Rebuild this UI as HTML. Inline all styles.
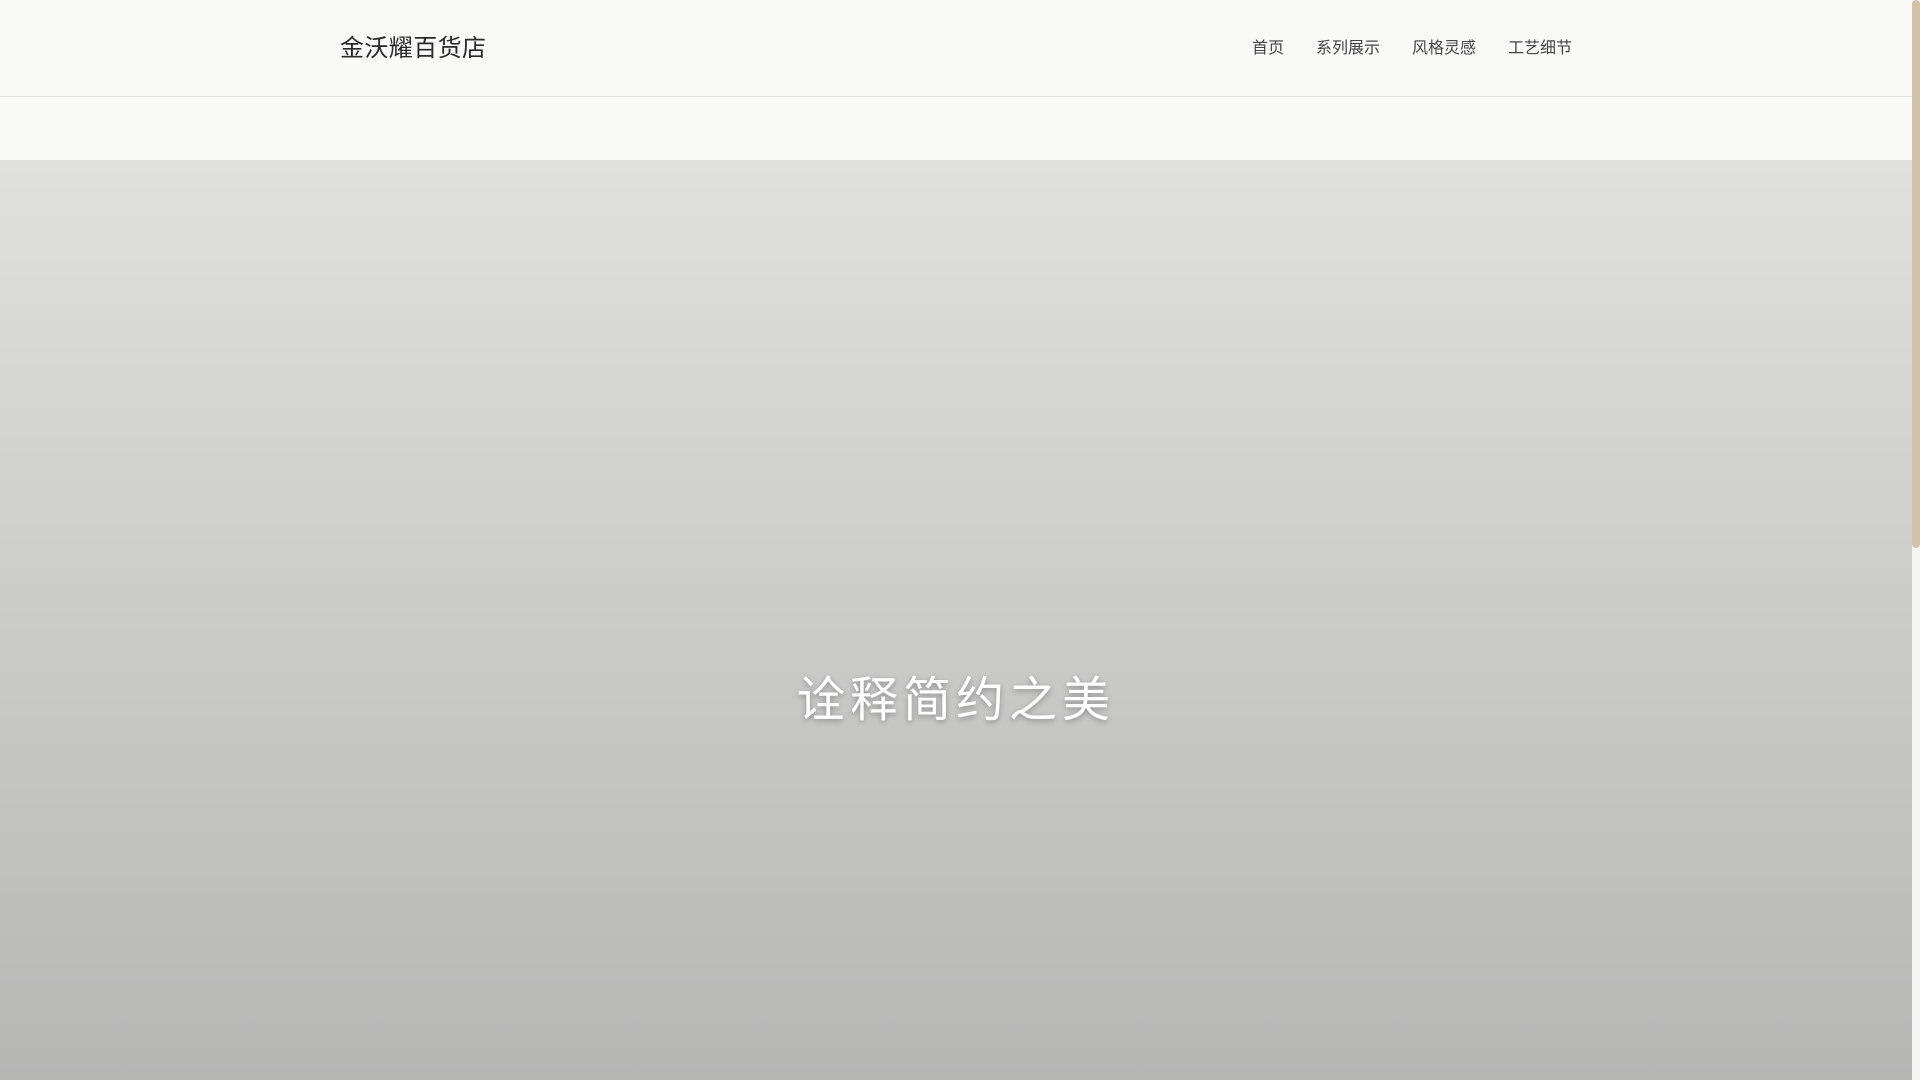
<!DOCTYPE html>
<html><head><meta charset="utf-8"><style>
html,body{margin:0;padding:0;width:1920px;height:1080px;overflow:hidden;background:#f9f9f7;font-family:"Liberation Sans","Noto Sans CJK SC",sans-serif}
.hdr{position:absolute;left:0;top:0;width:1912px;height:96px;border-bottom:1px solid #e2e2e0;background:#f9f9f7}
.logo{position:absolute;left:340px;top:33px;font-size:24px;line-height:32px;letter-spacing:0.4px;color:#2a2a2a}
.nav{position:absolute;left:1252px;top:38px;font-size:16px;line-height:22px;color:#444}
.nav span{margin-right:32px}
.hero{position:absolute;left:0;top:160px;width:1912px;height:920px;background:linear-gradient(#e0e0de,#b6b6b5)}
.hero h1{position:absolute;left:0;width:100%;top:509px;margin:0;text-align:center;font-weight:normal;font-size:48px;line-height:64px;letter-spacing:5px;color:#fff;text-shadow:0 2px 6px rgba(0,0,0,.3)}
.sb{position:absolute;left:1912px;top:0;width:8px;height:1080px;background:#f5f5f3}
.th{position:absolute;left:1912px;top:0;width:8px;height:548px;background:#d2c2aa;border-radius:4px}
</style></head><body>
<div class="hdr"><div class="logo">金沃耀百货店</div>
<div class="nav"><span>首页</span><span>系列展示</span><span>风格灵感</span><span>工艺细节</span></div></div>
<div class="hero"><h1>诠释简约之美</h1></div>
<div class="sb"></div><div class="th"></div>
</body></html>
